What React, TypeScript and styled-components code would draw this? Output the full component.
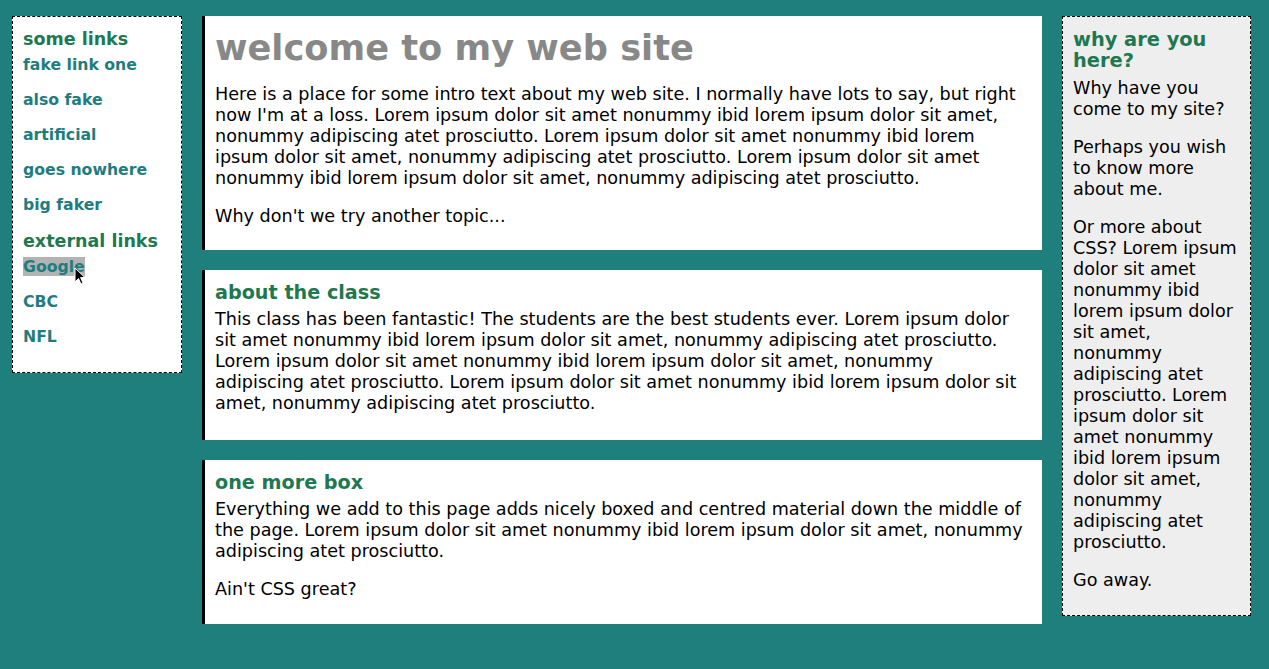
import React from "react";
import styled, { createGlobalStyle } from "styled-components";

const Global = createGlobalStyle`
  html, body { margin: 0; padding: 0; }
  body {
    background: #1e7f7d;
    font-family: "DejaVu Sans", Verdana, sans-serif;
    color: #000;
  }
`;

const Page = styled.div`
  display: flex;
  align-items: flex-start;
  gap: 20px;
  padding: 16px 18px 0 12px;
  width: 1269px;
  box-sizing: border-box;
`;

const LeftBar = styled.nav`
  width: 170px;
  box-sizing: border-box;
  background: #fff;
  border: 1px dashed #000;
  padding: 12px 10px 9px 10px;
  flex: none;
`;

const RightBar = styled.aside`
  width: 189px;
  box-sizing: border-box;
  background: #eeeeee;
  border: 1px dashed #000;
  padding: 12px 10px 7px 10px;
  flex: none;
  font-size: 17.6px;
  line-height: 21px;
`;

const SideHeading = styled.h3`
  margin: 0 0 6px 0;
  font-size: 17.5px;
  line-height: 21px;
  font-weight: bold;
  color: #207850;
`;

const LinkList = styled.ul`
  list-style: none;
  margin: 0;
  padding: 0;
`;

const LinkItem = styled.li`
  margin: 0 0 17px 0;
  line-height: 18px;
`;

const SideLink = styled.a<{ $hover?: boolean }>`
  position: relative;
  font-size: 15.7px;
  font-weight: bold;
  color: #1f7d80;
  text-decoration: none;
  background: ${(p) => (p.$hover ? "#b3b3b3" : "transparent")};
`;

const Cursor = styled.svg`
  position: absolute;
  left: 51px;
  top: 10px;
  width: 12px;
  height: 18px;
  pointer-events: none;
`;

const Main = styled.main`
  width: 840px;
  flex: none;
  display: flex;
  flex-direction: column;
  gap: 20px;
`;

const Box = styled.section<{ $pb: number }>`
  background: #fff;
  border-left: 3px solid #000;
  padding: 11px 18px ${(p) => p.$pb}px 10px;
  font-size: 17.6px;
  line-height: 21px;
`;

const Title = styled.h1`
  margin: 0 0 15px 0;
  font-size: 35.2px;
  line-height: 42px;
  font-weight: bold;
  color: #888888;
`;

const BoxHeading = styled.h2<{ $side?: boolean }>`
  margin: 0 0 ${(p) => (p.$side ? "7px" : "5px")} 0;
  font-size: ${(p) => (p.$side ? "19.4px" : "19.2px")};
  line-height: ${(p) => (p.$side ? "21px" : "23px")};
  font-weight: bold;
  color: #207850;
`;

const Para = styled.p`
  margin: 0 0 17px 0;
`;

export default function App() {
  return (
    <>
      <Global />
      <Page>
        <LeftBar>
          <SideHeading>some links</SideHeading>
          <LinkList>
            <LinkItem><SideLink href="#">fake link one</SideLink></LinkItem>
            <LinkItem><SideLink href="#">also fake</SideLink></LinkItem>
            <LinkItem><SideLink href="#">artificial</SideLink></LinkItem>
            <LinkItem><SideLink href="#">goes nowhere</SideLink></LinkItem>
            <LinkItem><SideLink href="#">big faker</SideLink></LinkItem>
          </LinkList>
          <SideHeading>external links</SideHeading>
          <LinkList>
            <LinkItem>
              <SideLink href="#" $hover>
                Google
                <Cursor viewBox="0 0 12 18">
                  <path d="M1 1 L1 15 L4.5 11.5 L7 17 L9 16 L6.6 10.6 L11 10.6 Z" fill="#000" stroke="#fff" strokeWidth="1" strokeLinejoin="round" />
                </Cursor>
              </SideLink>
            </LinkItem>
            <LinkItem><SideLink href="#">CBC</SideLink></LinkItem>
            <LinkItem><SideLink href="#">NFL</SideLink></LinkItem>
          </LinkList>
        </LeftBar>

        <Main>
          <Box $pb={6}>
            <Title>welcome to my web site</Title>
            <Para>
              Here is a place for some intro text about my web site. I normally have lots to say, but right now I'm at a loss. Lorem ipsum dolor sit amet nonummy ibid lorem ipsum dolor sit amet, nonummy adipiscing atet prosciutto. Lorem ipsum dolor sit amet nonummy ibid lorem ipsum dolor sit amet, nonummy adipiscing atet prosciutto. Lorem ipsum dolor sit amet nonummy ibid lorem ipsum dolor sit amet, nonummy adipiscing atet prosciutto.
            </Para>
            <Para>Why don't we try another topic...</Para>
          </Box>
          <Box $pb={9}>
            <BoxHeading>about the class</BoxHeading>
            <Para>
              This class has been fantastic! The students are the best students ever. Lorem ipsum dolor sit amet nonummy ibid lorem ipsum dolor sit amet, nonummy adipiscing atet prosciutto. Lorem ipsum dolor sit amet nonummy ibid lorem ipsum dolor sit amet, nonummy adipiscing atet prosciutto. Lorem ipsum dolor sit amet nonummy ibid lorem ipsum dolor sit amet, nonummy adipiscing atet prosciutto.
            </Para>
          </Box>
          <Box $pb={7}>
            <BoxHeading>one more box</BoxHeading>
            <Para>
              Everything we add to this page adds nicely boxed and centred material down the middle of the page. Lorem ipsum dolor sit amet nonummy ibid lorem ipsum dolor sit amet, nonummy adipiscing atet prosciutto.
            </Para>
            <Para>Ain't CSS great?</Para>
          </Box>
        </Main>

        <RightBar>
          <BoxHeading $side>why are you here?</BoxHeading>
          <Para>Why have you come to my site?</Para>
          <Para>Perhaps you wish to know more about me.</Para>
          <Para>
            Or more about CSS? Lorem ipsum dolor sit amet nonummy ibid lorem ipsum dolor sit amet, nonummy adipiscing atet prosciutto. Lorem ipsum dolor sit amet nonummy ibid lorem ipsum dolor sit amet, nonummy adipiscing atet prosciutto.
          </Para>
          <Para>Go away.</Para>
        </RightBar>
      </Page>
    </>
  );
}
